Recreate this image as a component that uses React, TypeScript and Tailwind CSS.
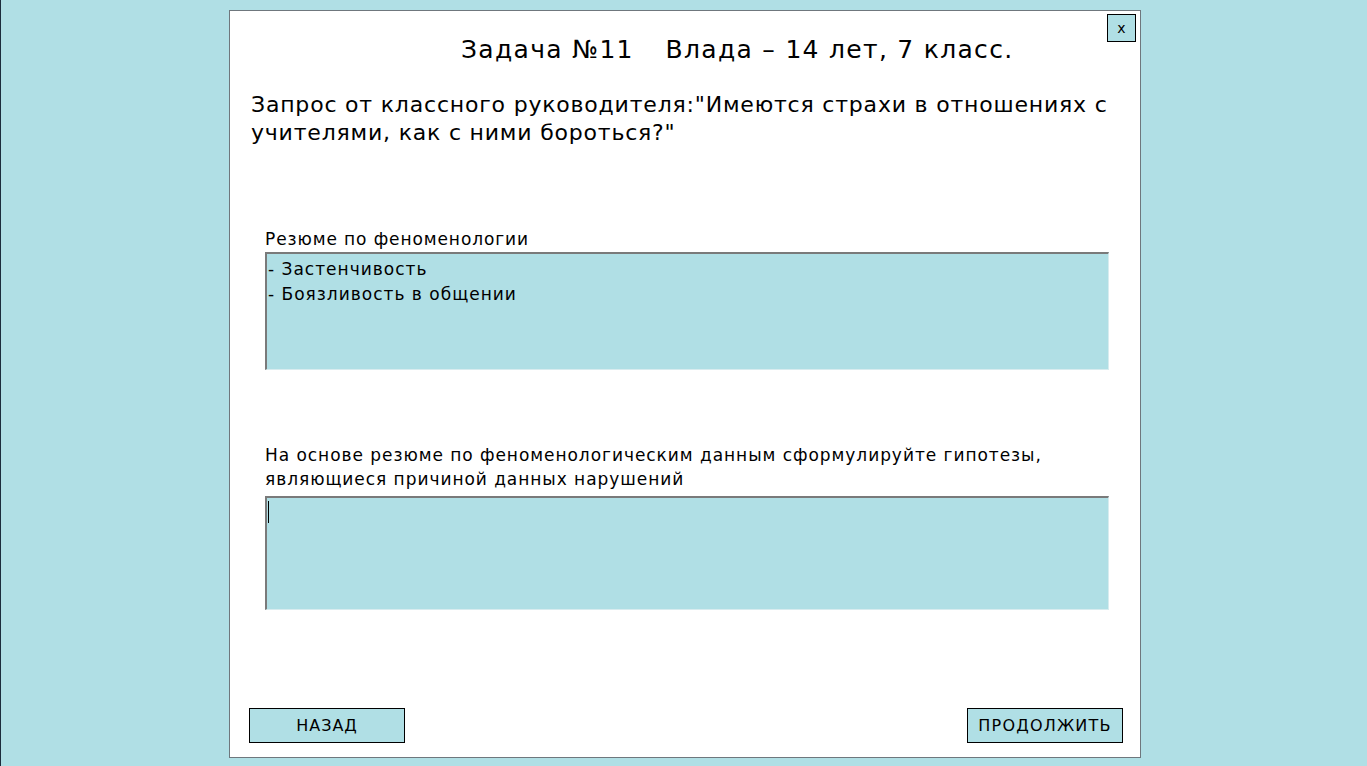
import React from 'react';

const font = { fontFamily: '"DejaVu Sans", Verdana, sans-serif' };

export default function App() {
  return (
    <div className="w-[1367px] h-[766px] bg-[#b0dfe5] border-l border-[#1c2c3c] overflow-hidden" style={font}>
      <div className="ml-[228px] mt-[10px] w-[912px] h-[748px] bg-white border border-[#6f777d] flex flex-col relative">
        <button className="absolute right-[4px] top-[3px] w-[29px] h-[28px] bg-[#b0dfe5] border border-black text-[14px] text-black leading-none">
          x
        </button>
        <h1 className="pl-[231px] pt-[23px] text-[25px] leading-[32px] tracking-[1.3px] text-black whitespace-pre">
          Задача №11   <span className="ml-[4px]">Влада – 14 лет, 7 класс.</span>
        </h1>
        <p className="pl-[21px] pr-[14px] mt-[25px] text-[22px] leading-[28px] tracking-[0.8px] text-black">
          Запрос от классного руководителя:"Имеются страхи в отношениях с учителями, как с ними бороться?"
        </p>

        <div className="pl-[35px] pr-[31px] mt-[80px]">
          <div className="text-[17px] leading-[24px] tracking-[0.9px] text-black">Резюме по феноменологии</div>
          <div className="h-[118px] mt-[1px] bg-[#b0dfe5] border-t-2 border-l-2 border-[#7a7a7a] border-r border-b border-r-[#d8ecef] border-b-[#d8ecef] pl-px pt-[3px] text-[17px] leading-[25px] tracking-[1px] text-black">
            <div>- Застенчивость</div>
            <div>- Боязливость в общении</div>
          </div>
        </div>

        <div className="pl-[35px] pr-[31px] mt-[73px]">
          <div className="text-[17px] leading-[24px] tracking-[0.95px] text-black">
            На основе резюме по феноменологическим данным сформулируйте гипотезы,
            <br />
            являющиеся причиной данных нарушений
          </div>
          <div className="h-[114px] mt-[5px] bg-[#b0dfe5] border-t-2 border-l-2 border-[#7a7a7a] border-r border-b border-r-[#d8ecef] border-b-[#d8ecef] pl-px pt-[3px]">
            <div className="w-px h-[22px] bg-black" />
          </div>
        </div>

        <div className="mt-auto mb-[14px] pl-[19px] pr-[17px] flex justify-between">
          <button className="w-[156px] h-[35px] bg-[#b0dfe5] border border-black text-[16px] tracking-[1px] text-black">НАЗАД</button>
          <button className="w-[156px] h-[35px] bg-[#b0dfe5] border border-black text-[16px] tracking-[1.2px] text-black">ПРОДОЛЖИТЬ</button>
        </div>
      </div>
    </div>
  );
}
